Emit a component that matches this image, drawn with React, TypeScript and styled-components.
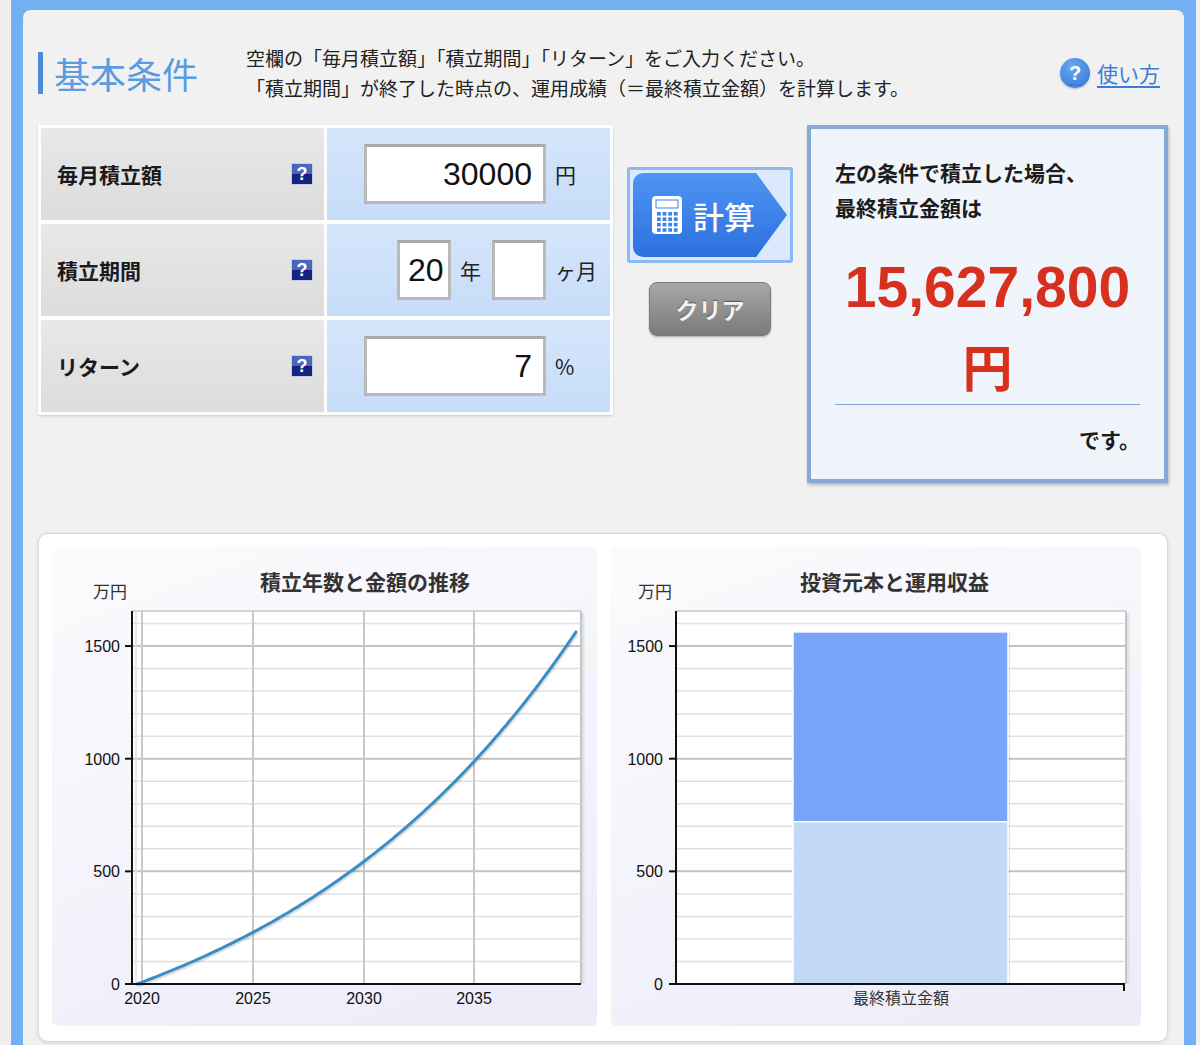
import styled, { createGlobalStyle } from "styled-components";

const GlobalStyle = createGlobalStyle`
  html, body {
    margin: 0;
    padding: 0;
  }
  body {
    background: #efefef;
    font-family: "Noto Sans CJK JP", "Noto Sans", sans-serif;
    color: #222;
  }
`;

const Frame = styled.div`
  margin: 0 4px 0 11px;
  padding: 10px 12px 0;
  height: 1045px;
  box-sizing: border-box;
  overflow: hidden;
  background: #72b0f3;
`;

const Inner = styled.div`
  height: 100%;
  box-sizing: border-box;
  padding: 33px 16px 0 15px;
  background: #f1f1f1;
  border-radius: 8px 8px 0 0;
`;

const Header = styled.div`
  display: flex;
  align-items: center;
  height: 60px;
`;

const Title = styled.h1`
  margin: 0;
  width: 208px;
  display: flex;
  align-items: center;
  gap: 11px;
  font-size: 36px;
  font-weight: 400;
  line-height: 42px;
  color: #5b9be0;

  &::before {
    content: "";
    width: 5px;
    height: 42px;
    background: #4d8ad9;
  }
`;

const Description = styled.p`
  flex: 1;
  margin: 0;
  font-size: 19px;
  line-height: 30px;
  color: #222;
`;

const HelpLink = styled.a`
  display: flex;
  align-items: center;
  gap: 7px;
  margin-right: 8px;
  font-size: 21px;
  color: #3a7cd6;
  text-decoration: underline;
  text-underline-offset: 4px;
`;

const HelpCircle = styled.span`
  width: 30px;
  height: 30px;
  border-radius: 50%;
  background: radial-gradient(circle at 40% 30%, #6aa9f3, #2e72d8);
  color: #fff;
  font-family: "Liberation Sans", sans-serif;
  font-weight: 700;
  font-size: 20px;
  line-height: 30px;
  text-align: center;
  box-shadow: 0 1px 2px rgba(0, 0, 0, 0.25);
`;

const MainRow = styled.div`
  display: flex;
  align-items: flex-start;
  margin-top: 22px;
`;

const FormTable = styled.div`
  display: grid;
  grid-template-columns: 283px 283px;
  grid-auto-rows: 92px;
  gap: 4px 3px;
  padding: 3px;
  width: 575px;
  box-sizing: border-box;
  background: #fff;
  box-shadow: 0 1px 2px rgba(0, 0, 0, 0.18);
`;

const LabelCell = styled.div`
  display: flex;
  align-items: center;
  justify-content: space-between;
  padding: 0 11px 0 16px;
  background: linear-gradient(#e8e8e8, #dcdcdc);
  font-size: 21px;
  font-weight: 700;
  color: #1a1a1a;
`;

const HelpBadge = styled.span`
  width: 22px;
  height: 22px;
  box-sizing: border-box;
  border: 1px solid #c9cde3;
  background: linear-gradient(#4767ba 0 52%, #13237f 52% 100%);
  color: #fff;
  font-family: "Liberation Sans", sans-serif;
  font-weight: 700;
  font-size: 18px;
  line-height: 20px;
  text-align: center;
`;

const ValueCell = styled.div`
  display: flex;
  align-items: center;
  justify-content: flex-end;
  padding-right: 13px;
  background: linear-gradient(#d5e6fb, #c7dcf8);
`;

const NumberInput = styled.input<{ $small?: boolean }>`
  width: ${(p) => (p.$small ? 54 : 182)}px;
  height: 60px;
  box-sizing: border-box;
  border: 3px solid #b9b9b9;
  border-top-color: #a8a8a8;
  padding: ${(p) => (p.$small ? "0 0 0 8px" : "0 11px 0 4px")};
  background: #fff;
  font-family: "Liberation Sans", Arial, sans-serif;
  font-size: 32px;
  color: #111;
  text-align: ${(p) => (p.$small ? "left" : "right")};
  outline: none;
`;

const Unit = styled.span<{ $w?: number; $after?: number }>`
  width: ${(p) => p.$w ?? 42}px;
  margin-left: 9px;
  margin-right: ${(p) => p.$after ?? 0}px;
  font-size: 21px;
  color: #222;
`;

const SideCol = styled.div`
  flex: 1;
  display: flex;
  flex-direction: column;
  align-items: center;
  gap: 19px;
  padding-top: 42px;
`;

const CalcButton = styled.button`
  width: 166px;
  height: 96px;
  box-sizing: border-box;
  padding: 3px;
  border: 3px solid #8bb9f4;
  border-radius: 3px;
  background: #dce9fc;
  cursor: pointer;
`;

const ArrowFace = styled.span`
  display: flex;
  align-items: center;
  gap: 10px;
  height: 100%;
  padding-left: 18px;
  border-radius: 10px 0 0 10px;
  clip-path: polygon(0 0, 80% 0, 100% 50%, 80% 100%, 0 100%);
  background: linear-gradient(#4f95f3, #2b70df);
  color: #fff;
  font-family: "Noto Sans CJK JP", sans-serif;
  font-size: 31px;
  font-weight: 500;
`;

const ClearButton = styled.button`
  width: 122px;
  height: 54px;
  border: 1px solid #7a7a7a;
  border-radius: 8px;
  background: linear-gradient(#a8a8a8, #7a7a7a);
  color: #f2f2f2;
  font-family: "Noto Sans CJK JP", sans-serif;
  font-size: 23px;
  font-weight: 700;
  text-shadow: 0 -1px 1px rgba(0, 0, 0, 0.45);
  box-shadow: 0 1px 2px rgba(0, 0, 0, 0.3);
  cursor: pointer;
`;

const ResultBox = styled.div`
  width: 361px;
  height: 358px;
  box-sizing: border-box;
  padding: 26px 24px 0;
  border: 4px solid #86a9d7;
  background: #f0f5fb;
  box-shadow: 1px 2px 3px rgba(0, 0, 0, 0.25);
`;

const Lead = styled.p`
  margin: 0;
  font-size: 21px;
  font-weight: 700;
  line-height: 35px;
  color: #1c1c1c;
`;

const Amount = styled.div`
  margin-top: 23px;
  text-align: center;
  color: #d8301e;
  font-family: "Liberation Sans", Arial, sans-serif;
  font-size: 57px;
  font-weight: 700;
  line-height: 78px;
`;

const AmountYen = styled.div`
  text-align: center;
  color: #d8301e;
  font-size: 50px;
  font-weight: 700;
  line-height: 78px;
`;

const Divider = styled.hr`
  margin: 0;
  border: none;
  border-top: 1px solid #7ea3d6;
`;

const Closing = styled.p`
  margin: 19px 0 0;
  text-align: right;
  font-size: 21px;
  font-weight: 700;
  line-height: 30px;
  color: #1c1c1c;
`;

const ChartPanel = styled.div`
  display: grid;
  grid-template-columns: 545px 530px;
  column-gap: 14px;
  margin-top: 50px;
  padding: 13px 27px 15px 13px;
  background: #fff;
  border: 1px solid #d9d9d9;
  border-radius: 10px;
  box-shadow: 0 1px 4px rgba(0, 0, 0, 0.12);
`;

const ChartCard = styled.div`
  display: flex;
  flex-direction: column;
  height: 479px;
  border-radius: 6px;
  background: linear-gradient(160deg, #fbfbfd, #ececf9);
`;

const ChartHead = styled.div<{ $unitLeft: number }>`
  display: flex;
  align-items: flex-end;
  height: 54px;
  padding-left: ${(p) => p.$unitLeft}px;
`;

const UnitLabel = styled.span`
  width: 40px;
  font-size: 17px;
  line-height: 20px;
  color: #333;
`;

const ChartTitle = styled.h2<{ $shift: number }>`
  flex: 1;
  margin: 0 0 8px;
  padding-right: ${(p) => p.$shift}px;
  text-align: center;
  font-size: 21px;
  font-weight: 700;
  line-height: 24px;
  color: #333;
`;

const Plot = styled.svg`
  display: block;
  font-family: "Liberation Sans", Arial, sans-serif;
  font-size: 16px;
`;

const PER = 0.2253;
const B = 383;
const T = 10;
const yOf = (v: number) => B - v * PER;
const minorLevels = Array.from({ length: 16 }, (_, i) => (i + 1) * 100);
const majorLevels = [0, 500, 1000, 1500];

const rate = 0.07 / 12;
const fvMan = (m: number) => (m === 0 ? 0 : (30000 * (Math.pow(1 + rate, m) - 1)) / rate / 10000);

const curve = Array.from({ length: 121 }, (_, i) => {
  const m = i * 2;
  return `${(85 + (m / 12) * 21.95).toFixed(1)},${yOf(fvMan(m)).toFixed(1)}`;
}).join(" ");

function GridLines({ left, right }: { left: number; right: number }) {
  return (
    <g>
      {minorLevels.map((v) => (
        <line
          key={v}
          x1={left}
          x2={right}
          y1={yOf(v)}
          y2={yOf(v)}
          stroke={v % 500 === 0 ? "#c2c2c2" : "#e0e0e0"}
          strokeWidth={v % 500 === 0 ? 2 : 1.5}
        />
      ))}
    </g>
  );
}

function YAxis({ left, labelX }: { left: number; labelX: number }) {
  return (
    <g>
      {majorLevels.map((v) => (
        <g key={v}>
          <line x1={left - 7} x2={left} y1={yOf(v)} y2={yOf(v)} stroke="#111" strokeWidth="2" />
          <text x={labelX} y={yOf(v) + 6} textAnchor="end" fill="#111">
            {v}
          </text>
        </g>
      ))}
      <line x1={left} x2={left} y1={T} y2={B + 1} stroke="#111" strokeWidth="2" />
    </g>
  );
}

function PlotFrame({ left, right }: { left: number; right: number }) {
  return (
    <g>
      <rect x={left} y={T} width={right - left} height={B - T} fill="#fff" />
      <line x1={left} x2={right} y1={T} y2={T} stroke="#d4d4d4" strokeWidth="2" />
      <line x1={right + 2} x2={right + 2} y1={T + 2} y2={B} stroke="#e2e2e2" strokeWidth="3" />
      <line x1={right} x2={right} y1={T} y2={B} stroke="#c4c4c4" strokeWidth="2" />
    </g>
  );
}

function GrowthChart() {
  const L = 80;
  const R = 529;
  const years = [
    { label: "2020", x: 90 },
    { label: "2025", x: 201 },
    { label: "2030", x: 312 },
    { label: "2035", x: 422 },
  ];
  return (
    <Plot width="545" height="425" viewBox="0 0 545 425">
      <PlotFrame left={L} right={R} />
      <GridLines left={L} right={R} />
      <line x1={L + 4} x2={L + 4} y1={T} y2={B} stroke="#e0e0e0" strokeWidth="1.5" />
      {years.map((y) => (
        <line key={y.label} x1={y.x} x2={y.x} y1={T} y2={B} stroke="#c8c8c8" strokeWidth="2" />
      ))}
      <polyline points={curve} fill="none" stroke="rgba(0,0,0,0.12)" strokeWidth="3" transform="translate(1,2)" />
      <polyline points={curve} fill="none" stroke="#3a8dc6" strokeWidth="3" strokeLinecap="round" />
      <YAxis left={L} labelX={68} />
      <line x1={L - 7} x2={R} y1={B} y2={B} stroke="#111" strokeWidth="2" />
      {years.map((y) => (
        <text key={y.label} x={y.x} y={B + 20} textAnchor="middle" fill="#111">
          {y.label}
        </text>
      ))}
    </Plot>
  );
}

function BreakdownChart() {
  const L = 65;
  const R = 515;
  const principal = 720;
  const total = 1562.78;
  const barX = 182;
  const barW = 215;
  return (
    <Plot width="530" height="425" viewBox="0 0 530 425">
      <PlotFrame left={L} right={R} />
      <GridLines left={L} right={R} />
      <rect x={barX + 2} y={yOf(total) + 1} width={barW} height={B - yOf(total)} fill="rgba(0,0,0,0.1)" />
      <rect
        x={barX}
        y={yOf(total)}
        width={barW}
        height={yOf(principal) - yOf(total)}
        fill="#79a4f7"
        stroke="#fff"
        strokeWidth="1.5"
      />
      <rect
        x={barX}
        y={yOf(principal)}
        width={barW}
        height={B - yOf(principal)}
        fill="#c3d8f5"
        stroke="#fff"
        strokeWidth="1.5"
      />
      <YAxis left={L} labelX={52} />
      <line x1={L - 7} x2={R - 1} y1={B} y2={B} stroke="#111" strokeWidth="2" />
      <line x1={R - 2} x2={R - 2} y1={B} y2={B + 7} stroke="#111" strokeWidth="2" />
      <text
        x={290}
        y={B + 20}
        textAnchor="middle"
        fill="#333"
        style={{ fontFamily: '"Noto Sans CJK JP", sans-serif' }}
      >
        最終積立金額
      </text>
    </Plot>
  );
}

function CalculatorIcon() {
  const keys = [];
  for (let r = 0; r < 4; r++) {
    for (let c = 0; c < 4; c++) {
      keys.push(<rect key={`${r}-${c}`} x={6 + c * 5.6} y={17 + r * 5.4} width="3.8" height="3.6" fill="#3b82ea" />);
    }
  }
  return (
    <svg width="32" height="40" viewBox="0 0 32 40">
      <rect x="1" y="1" width="30" height="38" rx="4" fill="#fff" />
      <rect x="5" y="5" width="22" height="8" fill="#fff" stroke="#3b82ea" strokeWidth="1" />
      {keys}
    </svg>
  );
}

export default function App() {
  return (
    <>
      <GlobalStyle />
      <Frame>
        <Inner>
          <Header>
            <Title>基本条件</Title>
            <Description>
              空欄の「毎月積立額」「積立期間」「リターン」をご入力ください。
              <br />
              「積立期間」が終了した時点の、運用成績（＝最終積立金額）を計算します。
            </Description>
            <HelpLink href="#">
              <HelpCircle>?</HelpCircle>
              使い方
            </HelpLink>
          </Header>

          <MainRow>
            <FormTable>
              <LabelCell>
                毎月積立額
                <HelpBadge>?</HelpBadge>
              </LabelCell>
              <ValueCell>
                <NumberInput readOnly value="30000" />
                <Unit>円</Unit>
              </ValueCell>

              <LabelCell>
                積立期間
                <HelpBadge>?</HelpBadge>
              </LabelCell>
              <ValueCell>
                <NumberInput $small readOnly value="20" />
                <Unit $w={21} $after={11}>
                  年
                </Unit>
                <NumberInput $small readOnly value="" />
                <Unit>ヶ月</Unit>
              </ValueCell>

              <LabelCell>
                リターン
                <HelpBadge>?</HelpBadge>
              </LabelCell>
              <ValueCell>
                <NumberInput readOnly value="7" />
                <Unit>%</Unit>
              </ValueCell>
            </FormTable>

            <SideCol>
              <CalcButton>
                <ArrowFace>
                  <CalculatorIcon />
                  計算
                </ArrowFace>
              </CalcButton>
              <ClearButton>クリア</ClearButton>
            </SideCol>

            <ResultBox>
              <Lead>
                左の条件で積立した場合、
                <br />
                最終積立金額は
              </Lead>
              <Amount>15,627,800</Amount>
              <AmountYen>円</AmountYen>
              <Divider />
              <Closing>です。</Closing>
            </ResultBox>
          </MainRow>

          <ChartPanel>
            <ChartCard>
              <ChartHead $unitLeft={41}>
                <UnitLabel>万円</UnitLabel>
                <ChartTitle $shift={0}>積立年数と金額の推移</ChartTitle>
              </ChartHead>
              <GrowthChart />
            </ChartCard>
            <ChartCard>
              <ChartHead $unitLeft={27}>
                <UnitLabel>万円</UnitLabel>
                <ChartTitle $shift={30}>投資元本と運用収益</ChartTitle>
              </ChartHead>
              <BreakdownChart />
            </ChartCard>
          </ChartPanel>
        </Inner>
      </Frame>
    </>
  );
}
